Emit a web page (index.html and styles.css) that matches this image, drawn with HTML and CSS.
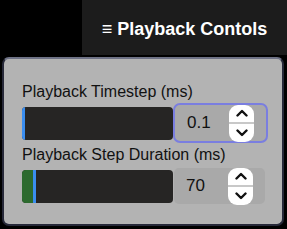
FILE: index.html
```html
<!DOCTYPE html>
<html lang="en">
<head>
    <meta charset="UTF-8">
    <meta name="viewport" content="width=device-width, initial-scale=1.0">
    <title>Playback Controls</title>
    <link rel="stylesheet" href="styles.css">
</head>
<body>

    <!-- Toggle bar -->
    <div class="topbar">
        <div class="toggle">&#8801; Playback Contols</div>
    </div>

    <!-- Controls panel -->
    <div class="panel">
        <div class="label">Playback Timestep (ms)</div>
        <div class="row">
            <div class="slider">
                <div class="fill" style="width: 0px"></div>
                <div class="thumb"></div>
            </div>
            <div class="number focused">
                <span class="value">0.1</span>
                <div class="spinner">
                    <svg width="12" height="8" viewBox="0 0 12 8"><path d="M1.5 6.5 L6 2 L10.5 6.5" fill="none" stroke="#111" stroke-width="2.4" stroke-linecap="round" stroke-linejoin="round"/></svg>
                    <div class="divider"></div>
                    <svg width="12" height="8" viewBox="0 0 12 8"><path d="M1.5 1.5 L6 6 L10.5 1.5" fill="none" stroke="#111" stroke-width="2.4" stroke-linecap="round" stroke-linejoin="round"/></svg>
                </div>
            </div>
        </div>

        <div class="label second">Playback Step Duration (ms)</div>
        <div class="row">
            <div class="slider">
                <div class="fill" style="width: 11px"></div>
                <div class="thumb"></div>
            </div>
            <div class="number">
                <span class="value">70</span>
                <div class="spinner">
                    <svg width="12" height="8" viewBox="0 0 12 8"><path d="M1.5 6.5 L6 2 L10.5 6.5" fill="none" stroke="#111" stroke-width="2.4" stroke-linecap="round" stroke-linejoin="round"/></svg>
                    <div class="divider"></div>
                    <svg width="12" height="8" viewBox="0 0 12 8"><path d="M1.5 1.5 L6 6 L10.5 1.5" fill="none" stroke="#111" stroke-width="2.4" stroke-linecap="round" stroke-linejoin="round"/></svg>
                </div>
            </div>
        </div>
    </div>

</body>
</html>
```

FILE: styles.css
```css
body {
    margin: 0;
    padding: 0;
    background-color: #000;
    font-family: "Liberation Sans", Arial, sans-serif;
}

.topbar {
    display: flex;
    justify-content: flex-end;
}

.toggle {
    width: 205px;
    height: 55px;
    box-sizing: border-box;
    padding-top: 19px;
    background-color: #1c1c1c;
    color: #fff;
    font-size: 18px;
    font-weight: bold;
    text-align: center;
}

.panel {
    width: 282px;
    height: 169px;
    box-sizing: border-box;
    margin: 2px 0 0 2px;
    padding: 23px 0 0 18px;
    background-color: #b3b3b3;
    border: 2px solid #262838;
    border-top-color: #6e7286;
    border-radius: 7px;
}

.label {
    color: #111;
    font-size: 16px;
    line-height: 20px;
}

.label.second {
    margin-top: 1px;
}

.row {
    display: flex;
    align-items: center;
    height: 42px;
}

.slider {
    display: flex;
    width: 151px;
    height: 33px;
    background-color: #262524;
    border-radius: 4px;
    overflow: hidden;
}

.fill {
    background-color: #2c6a2e;
}

.thumb {
    width: 3px;
    background-color: #3a8ef0;
}

.number {
    display: flex;
    align-items: center;
    width: 91px;
    height: 36px;
    margin-left: 1px;
    padding: 0 12px 0 12px;
    box-sizing: border-box;
    background-color: #a9a9a9;
    border-radius: 5px;
}

.number.focused {
    width: 95px;
    height: 40px;
    margin-left: 0;
    border: 2px solid #7a7ee0;
    border-radius: 7px;
}

.value {
    flex: 1;
    color: #111;
    font-size: 17px;
}

.spinner {
    display: flex;
    flex-direction: column;
    align-items: center;
    justify-content: space-between;
    width: 25px;
    height: 37px;
    box-sizing: border-box;
    padding: 4px 0 5px 0;
    background-color: #fff;
    border-radius: 9px;
}

.divider {
    width: 100%;
    height: 2px;
    background-color: #c8c8c8;
}
```
